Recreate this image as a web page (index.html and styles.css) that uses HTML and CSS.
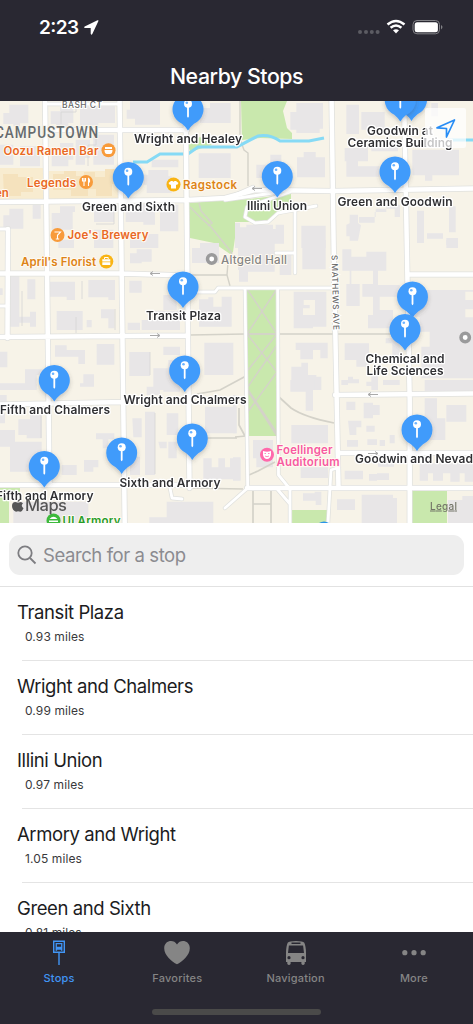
FILE: index.html
```html
<!DOCTYPE html>
<html lang="en">
<head>
<meta charset="utf-8">
<title>Nearby Stops</title>
<link rel="stylesheet" href="styles.css">
</head>
<body>
<div class="app">
<header class="header">
  <div class="status">
    <svg class="status-time" width="64" height="24" viewBox="0 0 64 24"><text x="1" y="18" class="clock" textLength="40">2:23</text><path d="M59.500 4.300Q60.900 3.800 60.300 5.300L54.300 17.900Q53.400 19.500 52.700 17.700V11.900H46.900Q45.100 11.200 46.700 10.400Z" fill="#fff"/></svg>
    <svg class="status-icons" width="88" height="20" viewBox="0 0 88 20">
      <g fill="#5c5c63"><circle cx="2" cy="14" r="2"/><circle cx="8" cy="14" r="2"/><circle cx="13.800" cy="14" r="2"/><circle cx="19.600" cy="14" r="2"/></g>
      <g fill="none" stroke="#fff" stroke-width="2.500"><path d="M29.500 6.500Q38 -.5 46.500 6.500"/><path d="M32.600 9.800Q38 5.100 43.400 9.800"/></g>
      <path d="M35 12.300Q38 10.200 41 12.300L38 15.600Z" fill="#fff"/>
      <rect x="55" y="2.500" width="26.500" height="13.300" rx="4" fill="none" stroke="#828287"/>
      <rect x="56.700" y="4.200" width="23.200" height="10" rx="2.500" fill="#fff"/>
      <path d="M83 7Q86 9 83 11.400Z" fill="#828287"/>
    </svg>
  </div>
  <h1 class="title"><span class="title-text">Nearby Stops</span></h1>
</header>

<section class="map">
<svg class="map-canvas" width="473" height="422" viewBox="0 101 473 422">
  <defs>
    <g id="pin"><path d="M0 21.500Q-2 18-6 14.700A15.500 15.500 0 1 1 6 14.700Q2 18 0 21.500Z" fill="#419bfb"/><path d="M-.9-3H.9V7.500Q0 9.800-.9 7.500Z" fill="#fff"/><circle cy="-5.300" r="4" fill="#fff"/><circle cx="-1.200" cy="-6.300" r="1.300" fill="#6cb3ff"/></g>
    <g id="arrow"><path d="M0 0H10M7-2L10 0L7 2" fill="none" stroke="#aaa" stroke-width="1"/></g>
    <filter id="shade" x="-30%" y="-30%" width="160%" height="160%"><feDropShadow dx="0" dy="2" stdDeviation="2" flood-color="#444" flood-opacity=".28"/></filter>
  </defs>
  <rect y="101" width="473" height="422" fill="#f7f3e8"/>

  <!-- parks -->
  <g fill="#c9e8ad">
    <path d="M189 203L215 201L250 199L291 194V203L278 213L268 222H235V238L233 252L230 254L214 243L190 238Z"/>
    <path d="M188 144L200 137L212 145L190 152ZM241 101H287L283 111L287 128L292 133V139L260 138L242 140Z"/>
    <path d="M246 289H277V436H248Z"/>
    <path d="M0 488H20V496H9V523H0ZM292 510H328V523H292ZM412 490H447V523H412Z"/>
  </g>

  <!-- commercial strip -->
  <path d="M0 168H45V200H0ZM49 171H118V199H49Z" fill="#f8ecd0"/>
  <path d="M3 174H18V177H33V192H21V196H4ZM53 174H64V171H76V176H84V172H95V177H105V169H118V184H112V196H96V189H88V196H71V190H53Z" fill="#f5e2bd"/>

  <!-- buildings -->
  <g fill="#e8e6e7">
    <g transform="translate(0 98) scale(.33333)">
      <path d="M10 45H28V20H85V76H60V85H40V78H10ZM152 40H180V28H220V75H205V92H168V78H152ZM240 25H345V75H295V82H240ZM390 10H480V80H405V62H380V35H390ZM60 145H120V205H60ZM0 140H40V200H0ZM155 170H180V135H220V185H205V205H155ZM227 125H270V180H255V200H227ZM280 110H342V200H280ZM430 230H445V216H505V235H515V285H440V260H430ZM455 185H535V208H455ZM596 166H692V240H596ZM600 30H630V15H692V75H600ZM705 375H720V450H705Z"/>
      <path d="M28 332H70V392H10V352H28ZM98 320H122V362H98ZM155 345H180V325H225V342H218V395H155ZM282 312H342V372H282ZM377 340H410V318H450V340H465V380H430V372H377ZM480 320H535V400H480ZM175 425H222V450H175ZM282 395H340V450H282ZM390 425H430V408H475V450H390Z"/>
    </g>
    <path d="M192 248H200V243H219V263H192Z"/>
    <g transform="translate(233 98) scale(.33333)">
      <path d="M172 42L190 42V15H270V92H260V105H190V95H172ZM70 200H112V170H145V240H70ZM192 178H212V162H248V178H276V238H192ZM340 20H378V108H340ZM385 42H455V95H385ZM335 150H375V138H405V190H375V205H440V236H340V190H335ZM415 125H495V160H415ZM538 155H678V232H598V248H576V232H538ZM595 15H615V55H595Z"/>
      <path d="M15 388H40V380H120V393H128V380H153V437H120V450H45V430H15ZM205 383H278V450H205ZM340 380L350 376V350H375V375L384 382L375 428H350V415H340ZM378 357H428V332H485V357H501V320H460V342H425V374H378ZM552 338H573V435H552ZM582 406H630V422H582ZM648 325H668V403H648ZM640 420H675V450H640Z"/>
    </g>
    <g transform="translate(0 240) scale(.33333)">
      <path d="M30 108H58V260H30ZM58 230H90V215H108V260H90V248H58ZM82 118H106V178H82ZM142 125H225V180H200V170H142ZM265 120H345V180H325V172H265ZM170 213H248V270H170ZM260 240H275V262H260ZM303 208H343V265H325V235H303ZM388 122H425V158H388ZM390 40H410V28H455V65H425V70H390ZM165 316H200V330H255V372H235V350H165ZM290 312H343V374H290ZM388 336H450V408H388ZM250 403H282V440H240V430H250ZM597 178H625V172H640V200H665V170H695V260H597ZM613 308H700V405H613ZM490 165H530V210H490ZM465 212H540V270H425V240H465ZM383 248H420V270H383ZM460 385H505V360H530V450H460ZM490 320H540V345H490ZM75 388H135V405H110V450H0V430H75ZM0 145H8V165H0ZM0 335H22V382H0Z"/>
    </g>
    <g transform="translate(233 240) scale(.33333)">
      <path d="M15 0H125V95H45V125H18V90H15ZM140 45H175V105H140ZM208 0H278V88H208ZM328 28H355V50H400V35H460V92H435V135H500V170H440V210H480V265H405V225H420V170H388V132H420V92H328ZM340 132H380V198H340ZM350 92H355V132H350ZM182 155H238V180H212V195H230V205H210V225H240V265H182ZM235 155H280V260H240V225H246V180H235ZM545 150H720V415H565V320H590V275H560V230H545ZM188 308H284V355H262V330H240V358H202V330H188ZM175 380H205V368H225V405H250V410H265V450H175ZM335 310H408V380H370V360H335ZM345 410H360V418H378V430H345ZM458 295H500V350H478V310H458ZM415 405H435V450H415ZM640 0H675V15H640ZM370 358H400V365H370Z"/>
      <path d="M697 155H720V180H697ZM697 208H720V232H697Z" fill="#f7f3e8"/>
    </g>
    <g transform="translate(0 380) scale(.33333)">
      <path d="M55 118H90V105H125V175H80V165H55ZM30 185H125V260H100V275H30ZM0 45H20V75H0ZM0 100H15V130H0ZM0 150H45V200H0ZM185 255H230V285H185ZM252 240H295V262H280V275H252ZM288 160H343V178H325V205H308V178H288ZM397 115H425V172H400ZM435 95H465V285H435ZM390 230H420V285H390ZM475 185H500V205H480ZM500 100H535V165H500ZM505 185H530V235H505ZM610 235H635V262H655V235H675V262H690V235H720V298H610ZM615 80H710V160H615ZM500 365H640V430H448V412H500ZM40 365H265V430H40ZM440 20H480V45H440ZM490 5H540V35H490Z"/>
    </g>
    <g transform="translate(233 380) scale(.33333)">
      <path d="M0 45H10V160H0ZM0 232H23V302H0ZM60 180H120V262H70V235H60ZM175 135H285V190H175ZM203 262H285V294H203ZM172 0H245V30H240V92H218V35H172ZM340 65H367V90H340ZM392 68H420V75H440V105H420V115H392ZM345 122H385V142H370V165H350ZM400 137H425V155H400ZM342 180H375V200H342ZM403 178H432V195H403ZM440 180H456V198H440ZM470 165H485V190H470ZM575 55H612V115H637V180H575ZM640 75H700V125H640ZM575 0H720V35H575ZM335 272H390V298H335ZM408 282H432V302H408ZM432 280H468V300H432ZM435 240H483V260H435ZM560 250H720V305H695V280H680V305H652V280H630V302H600V280H585V302H560ZM312 358H366V390H312ZM386 344H480V354H492V430H386ZM210 340H245V335H265V375H248V362H210ZM645 360H688V348H720V430H645Z"/>
      <path d="M325 0H345V15H325ZM400 5H430V18H400ZM450 0H500V15H450Z"/>
    </g>
  </g>
  <path d="M76 101V112H61V124M96 130V145H88V166M114 206V224H96M22 291V326M82 281V299M76 317V333M115 309V330M150 352V375M41 415V438M155 413V474" fill="none" stroke="#d6d4d5" stroke-width=".8"/>

  <!-- footpaths -->
  <g fill="none" stroke="#d4d2c9" stroke-width="1.700">
    <path d="M189 275H227L230 286M232 253L228 262L227 275M190 335L245 334H333M240 101V139L244 150L248 153V186M332 334H405M190 207L202 219L211 227L232 253M199 203L201 211L212 223L208 226" stroke-width="1.400"/>
    <path d="M247 289L277 334L248 370M277 289L247 334L277 372L247 413M246 334H277M277 345L247 388L277 433M247 390L277 436" stroke-width="1.400"/>
    <path d="M197 394L220 390L246 376M189 436L205 438H237M235 437L246 436M279 397L291 408Q304 417 334 423M239 408V425L245 436M189 488L243 489M249 475L258 471L275 462M253 490V523M271 490V523M253 504H271"/>
  </g>

  <!-- creek -->
  <path d="M133 162H147L160 154H188L198 147H237Q250 140 258 136Q270 134 280 141H309L324 138M448 140H473" fill="none" stroke="#86daf5" stroke-width="3"/>

  <!-- streets -->
  <g fill="none" stroke-linecap="round" stroke-linejoin="round">
    <g stroke="#e0e1de" stroke-width="6">
      <path d="M45 95L49.500 484M119.500 95L124.800 530M185.500 95L189.500 488M331.500 95L334 270L338.500 488M404 95L409.700 400V530M46 130H187M-2 202L187 200L225 198L255 190L333 191L480 188.500M-2 273.500H120L187 275.500M8 229L7.500 338M-2 337L187 335.500M-2 404.500L124 402M-2 485H187M409 274.500H480M335 395L480 393.500M339 453H480M247 488H480"/>
    </g>
    <g stroke="#e0e1de" stroke-width="4.300"><path d="M245 289L247.700 488L225 508M277.700 289L278.500 475L290 489V523M328 523L331 470L337 468M190 292H215L218 288H333M48 104H120M-2 229H8M-2 306H8M225 200L280 192M228 198L253 187M295 209V273M276 253H295M290 192L247 207L245 217L255 223L268 222L278 213L316 206M278 490L290 504M170 488L172 498L182 499"/></g>
    <g stroke="#fff" stroke-width="4.500">
      <path d="M45 95L49.500 484M119.500 95L124.800 530M185.500 95L189.500 488M331.500 95L334 270L338.500 488M404 95L409.700 400V530M46 130H187M-2 202L187 200L225 198L255 190L333 191L480 188.500M-2 273.500H120L187 275.500M8 229L7.500 338M-2 337L187 335.500M-2 404.500L124 402M-2 485H187M409 274.500H480M335 395L480 393.500M339 453H480M247 488H480"/>
    </g>
    <g stroke="#fff" stroke-width="2.800"><path d="M245 289L247.700 488L225 508M277.700 289L278.500 475L290 489V523M328 523L331 470L337 468M190 292H215L218 288H333M48 104H120M-2 229H8M-2 306H8M225 200L280 192M228 198L253 187M295 209V273M276 253H295M290 192L247 207L245 217L255 223L268 222L278 213L316 206M278 490L290 504M170 488L172 498L182 499"/></g>
  </g>
  <use href="#arrow" transform="translate(160 273.500) rotate(180)"/><use href="#arrow" x="150" y="335.500"/><use href="#arrow" transform="translate(262 188.500) rotate(180)"/><use href="#arrow" transform="translate(378 394.500) rotate(180)"/><use href="#arrow" x="368" y="453.500"/>

  <!-- places -->
  <g class="street"><text x="62" y="107.500" textLength="40">BASH CT</text><text transform="translate(331.500 255) rotate(88.500)" textLength="75" font-size="8.300">S MATHEWS AVE</text></g>
  <text class="district" transform="translate(-5 137.800) scale(.8 1)" textLength="129">CAMPUSTOWN</text>
  <g class="poi orange"><text x="3.500" y="154.500" textLength="95">Oozu Ramen Bar</text><text x="27" y="186.500" textLength="49">Legends</text><text x="-5" y="197">en</text><text x="67.500" y="239" textLength="81">Joe's Brewery</text></g>
  <g class="poi amber"><text x="183" y="189" textLength="54">Ragstock</text><text x="21" y="266" textLength="75">April's Florist</text></g>
  <text class="poi gray" x="221" y="263.800" textLength="66">Altgeld Hall</text>
  <g class="poi pink"><text x="276.500" y="453.800" textLength="56">Foellinger</text><text x="276.500" y="465.600" textLength="63">Auditorium</text></g>
  <text class="poi green" x="62.500" y="525" textLength="58">UI Armory</text>
  <g fill="#f89b3b"><circle cx="108.500" cy="150.300" r="7"/><circle cx="86" cy="182" r="7"/><circle cx="57.500" cy="235" r="7"/></g>
  <g fill="#f9b414"><circle cx="173.500" cy="184.500" r="7"/><circle cx="106.300" cy="261.500" r="7"/></g>
  <path d="M104.500 150H112.500Q112.500 154 110 154H107Q104.500 154 104.500 150ZM105 147H112V149H105Z" fill="#fff"/>
  <g fill="none" stroke="#fff"><path d="M84 178V186M82.500 178V181H85.500V178M88.500 178V186M88 178Q90 179 89.500 182H88.500" stroke-width="1.100"/><path d="M54.500 232H60.500L57.500 235.300V239M55.800 239H59.200" stroke-width="1.100"/><path d="M104.500 259V257.500H108.200V259" stroke-width="1"/></g>
  <path d="M171 181H172.500Q173.500 182.300 174.500 181H176L178.500 183L177 185L176 184.400V188.500H171V184.400L170 185L168.500 183ZM102.300 259.200H110.300V261.500H102.300ZM102.300 262.200H110.300V265H102.300Z" fill="#fff"/>
  <g fill="#fff" stroke="#9a9a9b" stroke-width="3.500"><circle cx="211.700" cy="259" r="4.200"/><circle cx="465.200" cy="337.500" r="4.200"/></g>
  <circle cx="267" cy="454.700" r="7" fill="#ff69ab"/><path d="M263 451Q267 452.500 271 451V455Q270 459 267 459Q264 459 263 455Z" fill="#fff"/><path d="M264.500 453.500H266M268 453.500H269.500M265 456Q267 457.500 269 456" stroke="#ff69ab" stroke-width=".8" fill="none"/>
  <circle cx="53.500" cy="520.500" r="7" fill="#3dba3c"/><path d="M49.500 519Q53.500 514.500 57.500 519ZM49 520.500H58V522H49Z" fill="#fff"/>
  <path d="M319 523Q324 520 329 523Z" fill="#2993e8"/>

  <!-- stop markers -->
  <g filter="url(#shade)"><use href="#pin" x="411.500" y="99.500"/><use href="#pin" x="412.500" y="296.500"/><use href="#pin" x="188" y="109"/><use href="#pin" x="128.300" y="177"/><use href="#pin" x="277.300" y="176"/><use href="#pin" x="395" y="171.500"/><use href="#pin" x="183" y="286.500"/><use href="#pin" x="184.700" y="370.500"/><use href="#pin" x="54.300" y="380"/><use href="#pin" x="192.300" y="438.500"/><use href="#pin" x="121.700" y="452.500"/><use href="#pin" x="44.300" y="466"/><use href="#pin" x="417" y="429.500"/></g>
  <g filter="url(#shade)"><use href="#pin" x="400.300" y="100"/><use href="#pin" x="405" y="329"/></g>
  <g class="stop">
    <text x="134" y="143" textLength="108">Wright and Healey</text>
    <text x="82" y="210.500" textLength="93">Green and Sixth</text>
    <text x="247" y="209.800" textLength="60">Illini Union</text>
    <text x="337.500" y="205.500" textLength="115">Green and Goodwin</text>
    <text x="367" y="134.700" textLength="66">Goodwin at</text><text x="347.500" y="146.700" textLength="105">Ceramics Building</text>
    <text x="146" y="319.800" textLength="75">Transit Plaza</text>
    <text x="123.500" y="404" textLength="123">Wright and Chalmers</text>
    <text x="365.500" y="362.700" textLength="79">Chemical and</text><text x="366.500" y="374.700" textLength="77">Life Sciences</text>
    <text x="0" y="413.700" textLength="110">Fifth and Chalmers</text>
    <text x="119.500" y="486.500" textLength="101">Sixth and Armory</text>
    <text x="-4" y="499.800" textLength="97.500">Fifth and Armory</text>
    <text x="355" y="463.300" textLength="125">Goodwin and Nevada</text>
  </g>
  <g class="attribution"><path d="M20.500 498.800Q20 501.500 17.700 502Q17.500 499.500 20.500 498.800ZM12 506Q12 502.200 15.500 502L18 502.800L21 502L23 503.300Q20.300 506 23.500 508.300Q22 511.800 20.500 511.800L18 511.300L16 511.800Q12 510 12 506Z"/><text x="25" y="511.300" font-size="16.500" textLength="42">Maps</text></g>
  <text class="legal" x="430" y="509.500" textLength="27">Legal</text>
</svg>
<div class="locate"><svg width="24" height="24" viewBox="0 0 24 24"><path d="M3 11.800L20.500 4L12.500 21V12.500Z" fill="none" stroke="#288df5" stroke-width="1.700" stroke-linejoin="round"/></svg></div>
</section>

<div class="search-bar"><div class="search">
  <svg width="20" height="20" viewBox="0 0 20 20" fill="none" stroke="#7d7d81" stroke-width="1.800"><circle cx="8" cy="8" r="6.700"/><path d="M13 13L18.500 18.500"/></svg>
  <span class="placeholder">Search for a stop</span>
</div></div>

<main class="stops">
  <article class="row"><h2 class="name">Transit Plaza</h2><p class="distance">0.93 miles</p></article>
  <article class="row"><h2 class="name">Wright and Chalmers</h2><p class="distance">0.99 miles</p></article>
  <article class="row"><h2 class="name">Illini Union</h2><p class="distance">0.97 miles</p></article>
  <article class="row"><h2 class="name">Armory and Wright</h2><p class="distance">1.05 miles</p></article>
  <article class="row"><h2 class="name">Green and Sixth</h2><p class="distance">0.81 miles</p></article>
</main>

<footer class="footer">
  <nav class="tabs">
    <div class="tab active"><svg width="28" height="28" viewBox="0 0 28 28"><path d="M8.700 3.200H19.300V14.200H8.700ZM14 14.200V27" fill="none" stroke="currentColor" stroke-width="1.400"/><path d="M10.600 5H17.400V12.700H15.900V11.700H12.100V12.700H10.600ZM11.900 6.300V8.700H16.100V6.300Z" fill="currentColor" fill-rule="evenodd"/></svg><span>Stops</span></div>
    <div class="tab"><svg width="28" height="28" viewBox="0 0 28 28"><path d="M14 26.300C9 23.500 1.200 17.500 1.200 10.200C1.200 2.500 10.500.5 14 6.500C17.500.5 26.800 2.500 26.800 10.200C26.800 17.500 19 23.500 14 26.300Z" fill="currentColor"/></svg><span>Favorites</span></div>
    <div class="tab"><svg width="28" height="28" viewBox="0 0 28 28"><path d="M5.700 4.700Q7 3 14 3Q21 3 22.300 4.700Q23.800 8 24 14.500V24H22.700V26Q21 28 19.400 26V24H8.600V26Q7 28 5.300 26V24H4V14.500Q4.200 8 5.700 4.700ZM9.500 4.600V5.900H18.500V4.600ZM6.900 7.600L6 15H22L21.100 7.600ZM7 18.100A1.600 1.600 0 1 0 7 21.300A1.600 1.600 0 1 0 7 18.100ZM21 18.100A1.600 1.600 0 1 0 21 21.300A1.600 1.600 0 1 0 21 18.100Z" fill="currentColor" fill-rule="evenodd"/></svg><span>Navigation</span></div>
    <div class="tab"><svg width="28" height="28" viewBox="0 0 28 28" fill="currentColor"><circle cx="4.800" cy="14.700" r="2.600"/><circle cx="14" cy="14.700" r="2.600"/><circle cx="23.200" cy="14.700" r="2.600"/></svg><span>More</span></div>
  </nav>
  <div class="home"></div>
</footer>
</div>
</body>
</html>
```
FILE: styles.css
```css
* { box-sizing: border-box; }
body { margin: 0; background: #fff; font-family: Inter, "Liberation Sans", sans-serif; }
h1, h2, p { margin: 0; font-weight: 400; }
svg { display: block; }
.app { display: flex; flex-direction: column; width: 473px; height: 1024px; overflow: hidden; }
.header { height: 101px; flex: none; background: #292832; color: #fff; }
.status { display: flex; justify-content: space-between; align-items: flex-start; height: 56px; padding: 16px 27px 0 38px; }
.status-icons { margin-top: 2px; }
.clock { font-size: 19px; font-weight: 600; fill: #fff; }
.title { display: flex; justify-content: center; font-size: 21.3px; font-weight: 500; line-height: 40px; letter-spacing: -0.45px; }
.map { position: relative; height: 422px; flex: none; overflow: hidden; }
.locate { position: absolute; left: 425px; top: 7px; width: 41px; height: 40px; border-radius: 2px; background: rgba(255, 255, 255, .72); display: flex; align-items: center; justify-content: center; }
.street { font-size: 8.5px; font-weight: 500; fill: #69696a; stroke: #fff; stroke-width: 2px; paint-order: stroke; }
.district { font: 500 17px Roboto, sans-serif; fill: #666b6d; stroke: #f8f5ed; stroke-width: 2px; paint-order: stroke; }
.poi { font-size: 11.5px; font-weight: 600; stroke: #fffaf1; stroke-width: 2px; stroke-linejoin: round; paint-order: stroke; }
.orange { fill: #e96824; }
.amber { fill: #dd8417; }
.gray { fill: #858585; font-weight: 500; }
.pink { fill: #f75aa1; }
.green { fill: #299d29; }
.stop { font-size: 12px; font-weight: 600; fill: #303033; stroke: #fff; stroke-width: 2.5px; stroke-linejoin: round; paint-order: stroke; }
.attribution { fill: #555; font-weight: 500; }
.legal { font-size: 10px; font-weight: 500; fill: #737568; text-decoration: underline; }
.search-bar { height: 64px; flex: none; padding: 12px 9px; border-bottom: 1px solid #e2e2e2; }
.search { display: flex; align-items: center; gap: 6px; height: 40px; padding: 0 8px; border-radius: 11px; background: #eee; }
.placeholder { font-size: 18.5px; color: #8b8b90; letter-spacing: -0.42px; }
.stops { flex: 1; min-height: 0; overflow: hidden; }
.row { display: flex; flex-direction: column; gap: 4px; height: 74px; padding: 13px 0 0 17px; background: linear-gradient(#e4e4e4, #e4e4e4) 22px 100% / 100% 1px no-repeat; }
.name { font-size: 18.5px; line-height: 24px; letter-spacing: -0.41px; color: #1c1c1e; }
.distance { padding-left: 8px; font-size: 12px; line-height: 18px; letter-spacing: .1px; color: #39393b; }
.footer { height: 92px; flex: none; background: #292832; }
.tabs { display: grid; grid-template-columns: repeat(4, 1fr); height: 77px; padding-top: 6px; }
.tab { display: flex; flex-direction: column; align-items: center; gap: 5px; color: #858585; font-size: 11px; font-weight: 500; line-height: 14px; letter-spacing: .2px; }
.active { color: #4195f5; }
.home { width: 169px; height: 6px; margin: 0 auto; border-radius: 3px; background: #4a4a49; }
```
